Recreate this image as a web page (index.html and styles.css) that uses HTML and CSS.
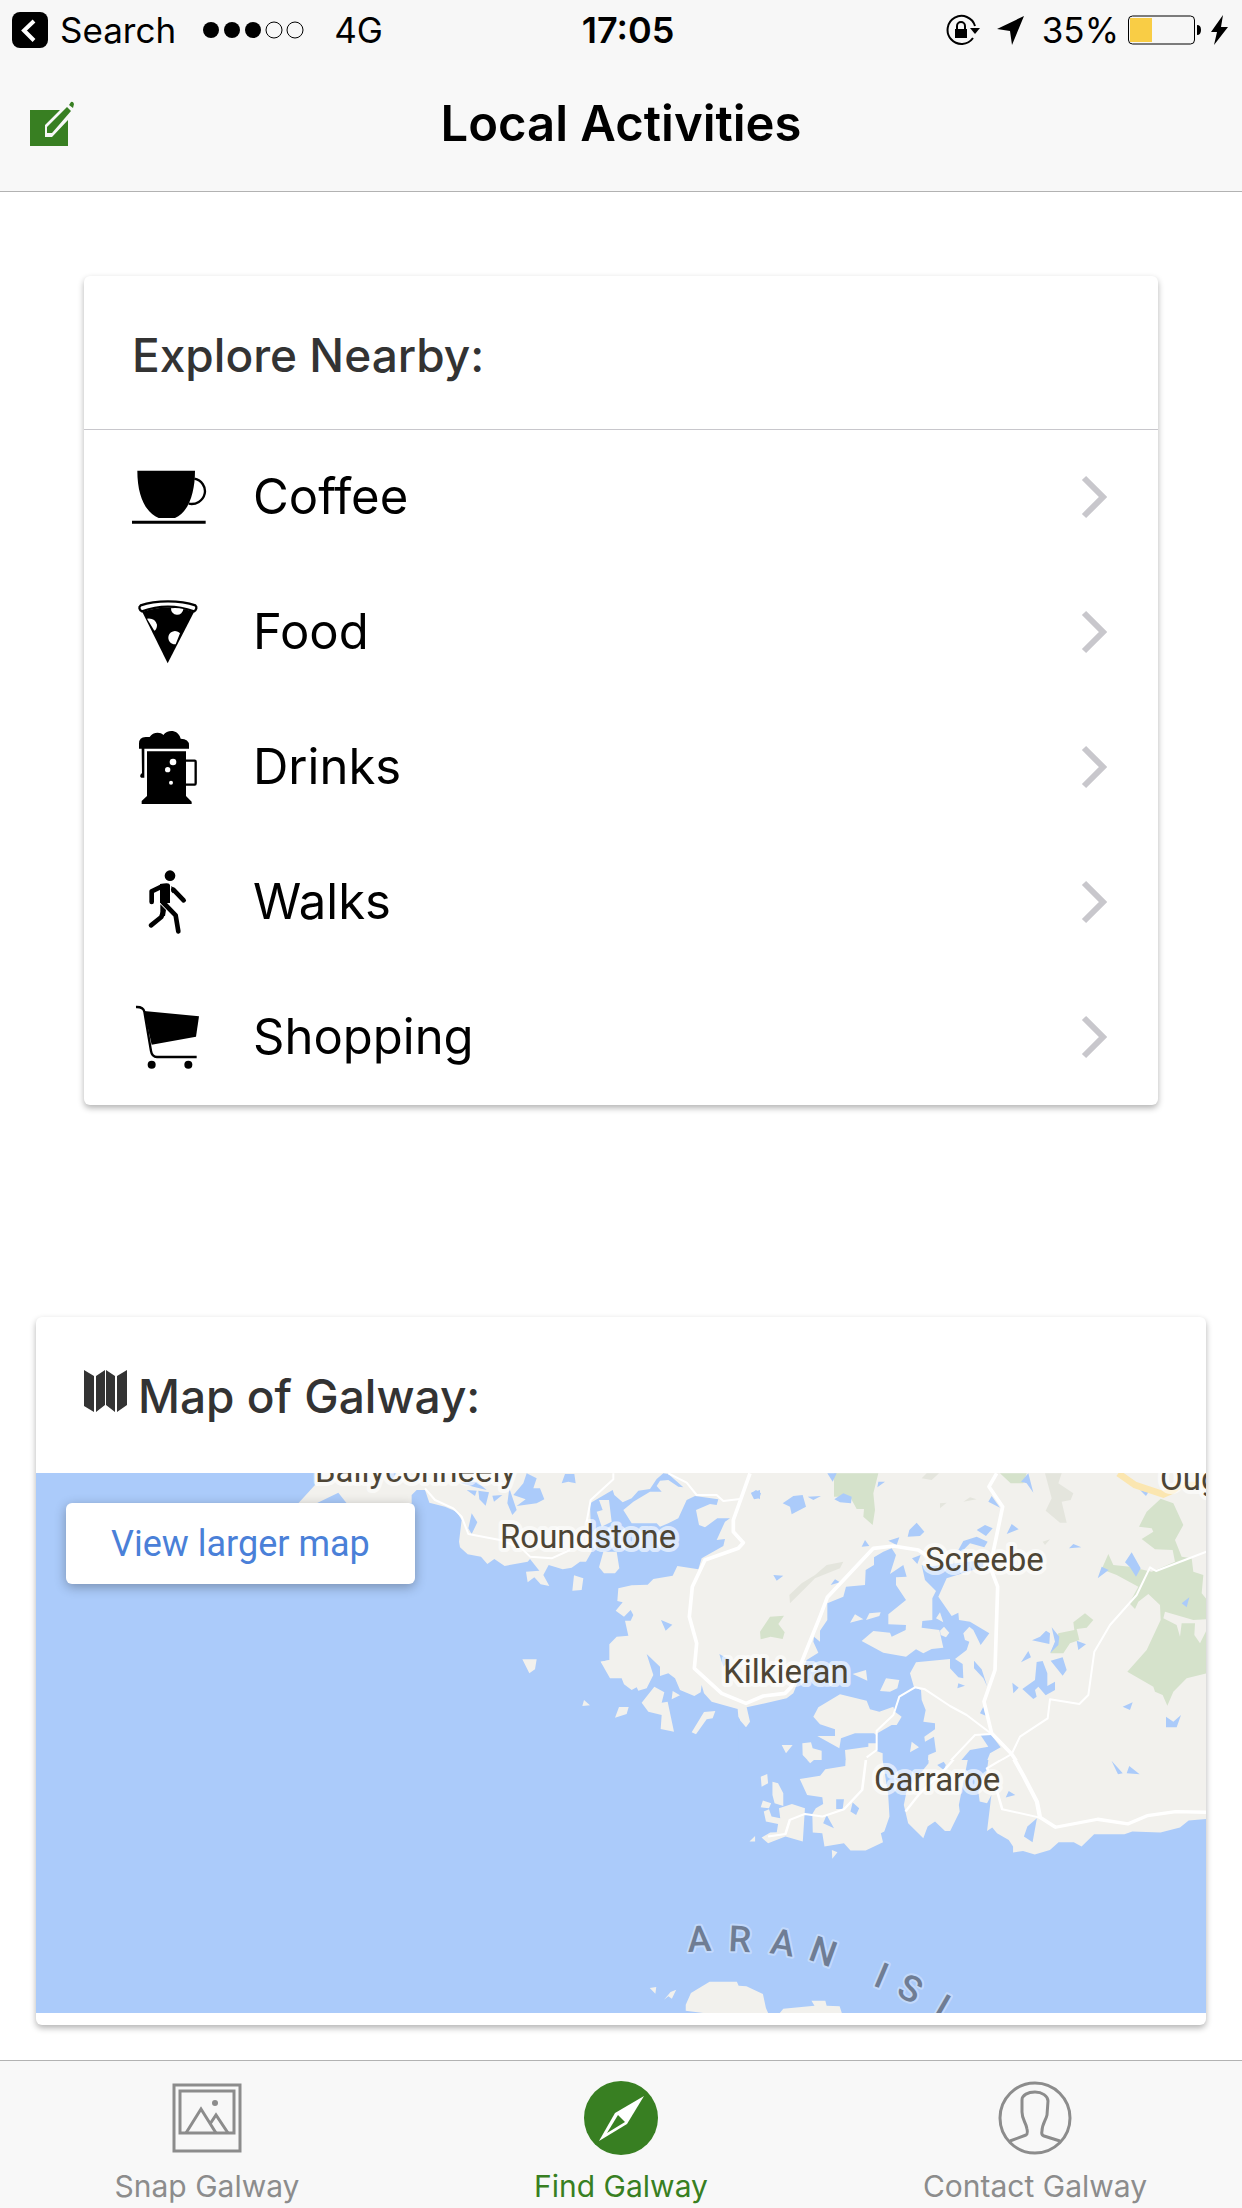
FILE: index.html
```html
<!DOCTYPE html>
<html lang="en">
<head>
<meta charset="utf-8">
<meta name="viewport" content="width=device-width, initial-scale=1">
<title>Local Activities</title>
<link rel="stylesheet" href="styles.css">
</head>
<body>
<header class="top">
  <div class="status">
    <div class="status-left">
      <a class="back" href="#search">
        <svg width="36" height="36" viewBox="0 0 36 36" aria-hidden="true"><rect width="36" height="36" rx="8"/><path d="M22 9 12 18.500l10 10" fill="none" stroke="#fff" stroke-width="4"/></svg>
        Search</a>
      <svg class="signal" width="102" height="18" viewBox="0 0 102 18" aria-hidden="true"><circle cx="9" cy="9" r="8"/><circle cx="30" cy="9" r="8"/><circle cx="51" cy="9" r="8"/><g fill="none" stroke="#000"><circle cx="72" cy="9" r="8"/><circle cx="93" cy="9" r="8"/></g></svg>
      <span>4G</span>
    </div>
    <span class="clock">17:05</span>
    <div class="status-right">
      <svg width="36" height="32" viewBox="0 0 36 32" aria-hidden="true"><path d="M30 12A14 14 0 1 0 28 24" fill="none" stroke="#000" stroke-width="2"/><path d="M25 14h10l-5 6z"/><path d="M10 15h12v9H10z"/><path d="M12 15v-3a4 4 0 0 1 8 0v3" fill="none" stroke="#000" stroke-width="2"/></svg>
      <svg class="arrow" width="27" height="32" viewBox="0 0 27 32" aria-hidden="true"><path d="M27 2 15 31l-2-14L0 15z"/></svg>
      <span>35%</span>
      <svg class="battery" width="74" height="30" viewBox="0 0 74 30" aria-hidden="true"><rect x=".5" y="1" width="66" height="28" rx="4" fill="none" stroke="#000"/><path d="M2 3h22v24H2z" fill="#f9cd45"/><path d="M69 10q4 0 4 5t-4 5z"/></svg>
      <svg width="17" height="30" viewBox="0 0 17 30" aria-hidden="true"><path d="M12 0 0 17h6L3 30 17 12h-7z"/></svg>
    </div>
  </div>
  <div class="nav">
    <button class="compose" type="button" aria-label="Compose"><svg width="45" height="45" viewBox="0 0 45 45" fill="#387f22" aria-hidden="true"><path d="M0 9h30L15 24v12h7l16-17v26H0z"/><path d="m17 26 20-20 4 4-19 22h-5zM39 4l2-3q2-1 3 2l-1 4z"/></svg></button>
    <h1>Local Activities</h1>
  </div>
</header>

<main>
  <section class="card explore">
    <h2>Explore Nearby:</h2>
    <ul>
      <li><a href="#coffee">
        <svg class="icon" viewBox="0 0 225 225" aria-hidden="true"><path d="M16 35h173c0 65-19 125-60 142H80C40 160 16 110 16 35zM0 185h221v9H0z"/><path d="M187 59a40 38 0 0 1-17 75" fill="none" stroke="#000" stroke-width="7"/></svg>
        <span>Coffee</span>
        <svg class="chevron" viewBox="0 0 26 44" aria-hidden="true"><path d="m3 3 19 19L3 41"/></svg></a></li>
      <li><a href="#food">
        <svg class="icon" viewBox="0 0 225 225" aria-hidden="true"><path d="M31 54c49-18 104-18 155 0l-79 154z"/><path d="M30 52c-8-3-11-13-4-18 45-16 119-16 164 0 6 5 3 15-4 18-51-18-106-18-156 0z" fill="#fff" stroke="#000" stroke-width="7"/><path d="M117 43q18-2 37 2a18 18 0 0 1-37-2zM45 74q24-3 30 18 0 14-8 18zM144 118a20 20 0 1 0-13 33z" fill="#fff"/></svg>
        <span>Food</span>
        <svg class="chevron" viewBox="0 0 26 44" aria-hidden="true"><path d="m3 3 19 19L3 41"/></svg></a></li>
      <li><a href="#drinks">
        <svg class="icon" viewBox="0 0 225 225" aria-hidden="true"><path d="M45 67h117v134l17 17v7H29v-9l16-15zM21 59V44q0-20 20-20h12c8-15 32-17 41-6 13-18 45-17 52 11q25 0 25 20v10zM29 59h8v87h-9q-8-5 2-14z"/><path d="M162 95h26q3 0 3 3v65q0 4-3 4h-26" fill="none" stroke="#000" stroke-width="7"/><g fill="#fff"><circle cx="123" cy="99" r="10"/><circle cx="107" cy="122" r="8"/><circle cx="117" cy="161" r="6"/></g></svg>
        <span>Drinks</span>
        <svg class="chevron" viewBox="0 0 26 44" aria-hidden="true"><path d="m3 3 19 19L3 41"/></svg></a></li>
      <li><a href="#walks">
        <svg class="icon" viewBox="0 0 225 225" aria-hidden="true"><circle cx="114" cy="35" r="16"/><path d="M84 60q25-4 28 0l2 4v53H84zM118 66l15 12-10 10-5-5zM85 121l17 17-3 18-14 2z"/><g fill="none" stroke="#000" stroke-width="14" stroke-linecap="round" stroke-linejoin="round"><path d="M90 67 59 82v32M124 77l31 32M92 114l39 40 8 48M91 150l-3 9-31 25"/></g></svg>
        <span>Walks</span>
        <svg class="chevron" viewBox="0 0 26 44" aria-hidden="true"><path d="m3 3 19 19L3 41"/></svg></a></li>
      <li><a href="#shopping">
        <svg class="icon" viewBox="0 0 225 225" aria-hidden="true"><path d="m36 36 165 16-9 61-133 24z"/><path d="M12 24q22-1 25 14l20 118q3 18 18 18h119" fill="none" stroke="#000" stroke-width="7"/><circle cx="59" cy="197" r="12"/><circle cx="169" cy="197" r="12"/></svg>
        <span>Shopping</span>
        <svg class="chevron" viewBox="0 0 26 44" aria-hidden="true"><path d="m3 3 19 19L3 41"/></svg></a></li>
    </ul>
  </section>

  <section class="card map-card">
    <h2><svg width="43" height="42" viewBox="0 0 43 42" fill="#333" aria-hidden="true"><path d="m0 0 10 6v36L0 36zM12 6l9-6v35l-9 7zM22 0l9 6v36l-9-7zM33 6l10-6v35l-10 7z"/></svg>Map of Galway:</h2>
    <div class="map">
      <svg class="map-art" viewBox="0 0 1170 540" preserveAspectRatio="xMidYMid slice" role="img" aria-label="Map of the Galway coast">
        <!-- northern coast -->
        <svg x="244" y="-13" width="926" height="300" viewBox="0 0 2778 900">
          <g class="land">
            <path d="M105 0V75L55 130H110L175 98 200 130H395V105L410 90H435L448 128 495 140 530 155 545 180 537 245 540 262 563 283 603 290 622 312 643 297 674 318 743 305 750 297 778 332 738 335 743 367 763 352 782 373 808 378 790 345 806 315 848 328 875 323 900 305 918 305 935 275 930 130 998 90 1003 105 1028 127 1055 115 1075 92 1110 87 1130 57 1150 40 1165 42 1210 82 1195 80 1165 60 1140 62 1130 78 1145 95 1110 95 1060 125 1030 150 1055 190 1130 190 1140 200 1165 190 1195 175 1220 120 1245 108 1315 118 1310 135 1290 132 1248 150 1257 195 1275 202 1312 175 1350 175 1335 185 1310 240 1335 237 1330 258 1265 295 1255 328 1192 318 1178 347 1120 357 1103 374 1055 376 1015 385 1012 423 1028 427 1007 452 1032 470 1052 450 1060 465 1052 482 1035 482 1045 527 1010 530 988 553V600L962 605 990 655H1025L1032 673 1055 690 1070 682 1075 692 1100 685 1120 645 1100 582 1140 620V648L1165 640 1185 655 1200 690 1243 708 1262 697 1265 675 1272 700 1295 725 1373 747 1375 770 1382 782V0z"/>
            <path d="M957 120H987L995 185 965 200 950 155 968 150zM970 275H1010L1018 325 1005 340H972L957 322zM882 346 910 355 905 390 877 392zM727 598H770L765 628 748 640zM962 605 990 600 1000 650zM1123 680 1153 697 1145 728 1163 725 1182 815 1142 807 1145 765 1105 755 1085 728zM1178 693 1200 706 1175 718zM912 720 930 736 907 738zM1017 741H1046L1040 762 1005 773zM1272 756 1306 753 1298 775 1280 778 1248 823 1235 817zM1380 740 1412 780 1400 802 1380 780zM1380 0H2778V900H1380z"/>
          </g>
          <g class="water">
            <path d="M575 160 592 187 575 222 565 205zM560 90 590 92 585 108zM595 92 627 97 617 137 598 118zM637 107 667 105 642 125zM688 85 710 150 697 165 682 130zM700 105 730 70 740 40 770 55 760 85 780 85 793 118 770 130 710 138 737 118zM845 70 855 42H883L887 70 865 65zM320 40H350L330 68zM540 68 590 65 620 90 580 80zM1143 480 1177 494 1157 512zM1413 98 1440 90V118zM1318 582 1350 600 1330 620z"/>
          </g>
          <g transform="translate(1380)">
            <g class="wood">
              <path d="M282 40H415L400 100 405 150 398 195 370 170 372 147H350L330 110H282zM780 40H860L850 70H812zM60 515 90 470 132 467 115 492 134 517 128 537 92 530 62 538zM1000 487 1035 460 1060 480 1040 503 1010 507 1018 540 990 550 970 580H932L955 520 1003 510zM1262 116 1300 130 1330 195 1305 240 1325 290 1355 295 1360 335 1390 345 1385 400 1400 418V478L1360 480 1275 455 1270 475 1310 495 1320 530 1325 490 1365 490 1363 525 1380 550 1400 510V640L1340 655 1300 695 1282 737 1268 705 1245 695 1240 680 1162 635 1220 570 1262 480 1260 435 1225 402 1195 425 1185 447 1168 430 1195 380 1130 345 1085 328 1105 282 1120 315 1170 320 1235 335 1305 305 1298 270 1245 268 1205 237 1240 215 1235 205 1197 200 1220 155z"/>
            </g>
            <path class="hill" d="M915 40H965L955 70 1000 100 992 120 965 125 980 188H960L917 152 935 115zM545 55 560 40H597L575 60zM148 405 185 370 225 345 260 315 310 305 300 325 225 355 200 380 150 430zM600 130 620 128 600 145zM670 125 690 112 710 118zM908 245 930 238 915 255z"/>
            <g class="water">
              <path d="M20 742 140 715 160 700 200 600 235 578 220 545 222 530 240 545V512L262 480V430L310 410 318 380 375 375 377 330 402 315V292L430 275 455 265 468 285 450 342 490 315 500 350 468 352V375L498 420 445 463V493L498 495 497 510 455 530 450 518 400 513 365 543 430 578 498 590 528 568 550 580 575 567 610 563 598 510 545 503 547 483 577 480V415L588 393 555 360 545 315 560 320 730 300V320L620 355 595 410 635 468 655 458 657 480 690 485 748 520 722 555 700 510 688 500 670 520 675 540 688 545 680 570 645 597 668 612 670 655 655 652 630 625V597L528 607 510 640 522 682 543 690 545 720 557 750 550 785 585 790V808L553 830 555 845 582 830 588 875 565 885 563 910H412L428 900V880L410 873 412 820 455 795H470L485 770 465 755 460 740 418 755 390 748 380 722 300 703 235 742 220 770 240 793 285 808V828H232L298 865 303 835 345 820 402 820 415 830 410 850H385V860L315 870 318 910H-5V775L18 802 30 785z"/>
              <path d="M33 100 48 90 63 100 58 115 42 118zM128 130 160 108 188 105 198 140 155 163 150 140zM203 110 243 108 220 120zM262 40H290L278 65zM283 118 310 100 335 110 333 130 300 127zM415 65 435 65 412 82zM843 65 865 40 880 98 860 70zM745 125 755 108 780 143zM530 188 553 215 540 228 503 230 508 210zM710 210 735 195 758 205 738 228zM800 222 815 192 836 208zM655 270 670 243 710 230 743 245 733 262 690 250 665 275zM365 260 375 240 388 258zM445 242 478 232 470 255zM516 295 542 285 532 312zM272 375 285 358 300 367zM100 345 130 347 110 362zM987 265 1000 252 1024 262zM1073 355 1085 320 1106 330zM1155 307 1175 277 1202 325 1188 350 1170 322zM1325 430 1348 412 1340 442zM876 541 900 530 918 512 930 520 928 552zM935 502 958 530 955 555 930 580 945 545zM1010 542 1038 553 1015 570zM843 607 865 573 873 592zM890 606 908 603 922 640V678L945 665V690L917 706 895 680 885 690 890 710 880 717 847 687 885 660zM932 602 968 592 980 630 968 647zM817 668 836 683 820 700zM702 602 725 628 742 680 730 655 702 625zM655 670 675 677 652 685zM720 760 730 740 737 767zM1148 740 1178 727 1170 750zM1278 770 1300 785 1323 765 1310 802H1278zM1200 90 1225 97 1218 108zM720 823H752L782 862 750 880 740 905H660L690 870 745 860zM600 905 617 900 620 910H590z"/>
            </g>
            <path class="land" d="M420 693 438 655 478 660 472 685 450 695zM330 488 345 463 370 478zM378 480 388 460 422 457 418 468zM588 475 600 457 610 487zM600 512 612 500 628 518 618 532 602 525zM338 642 378 630 382 662zM125 855H158L138 880zM187 850 213 847 218 865 245 872V900L210 908 188 885zM515 845 537 862 510 877z"/>
          </g>
          <g class="road">
            <path d="M1410 40 1360 180V215L1390 248 1375 265 1275 300 1237 380 1228 470 1250 550 1243 625 1325 700 1398 730 1450 708 1515 700 1535 680 1620 470 1642 412 1780 265 1840 258 1915 270 1945 290M2150 40 2127 80 2168 140 2145 250 2130 320 2153 380 2145 630 2112 725 2135 820 2195 882 2210 905"/>
            <path class="thin" d="M435 85 465 120 520 145 545 170 565 222 660 240 725 265 750 290 815 295 870 270M1000 40V58L932 120 920 185M1165 40 1220 68 1250 105 1310 105 1330 123 1380 117M2135 822 2060 765 2010 738 1935 688 1905 682 1858 710 1840 765 1790 812V870L1760 892M2780 275 2628 333 2610 322 2570 405 2490 495 2443 575 2425 705 2398 732 2310 718 2303 775 2220 830 2195 882 2130 920M2135 822 2085 825 1995 920"/>
          </g>
          <path class="main-road" d="M2515 40 2565 75 2650 103 2680 90 2700 75H2778"/>
        </svg>
        <!-- southern coast and islands -->
        <svg x="524" y="287" width="646" height="253" viewBox="0 240 1490 760" preserveAspectRatio="none">
          <path class="land" d="M560 225 577 250 590 235zM660 205 658 258 612 268 600 287 553 297 570 345 605 352 607 372 590 385 582 402 583 458 605 460 610 500 655 490 670 512H705L745 487 740 460 748 455 760 410 757 345 740 205zM535 372 565 385 560 485 520 470 480 490 465 473 485 458 500 457 503 432 475 425 470 395 482 388 488 410 508 415 505 385zM463 290 478 282 480 310 465 320zM490 305 503 310 515 340V378L495 370 490 345zM468 362 487 370 482 385 463 382zM437 485 450 468V485zM627 510 640 517 628 537zM850 220V250L800 330 793 375 803 430 838 475 848 440 865 425 888 453H900L922 395 920 375 945 210zM990 220 985 270 965 335 968 365 985 370 995 345 985 453 997 443 1008 460 1035 480 1045 500V518L1068 513 1095 524 1130 510 1150 487H1185L1203 500 1232 463H1302L1320 455 1385 458 1430 443 1450 422 1490 417V200zM290 975 302 940 345 906H408L412 918 430 920 468 943 475 985 480 1000H330L290 993zM507 1000 515 987 587 978 580 963H612L615 978 645 980 650 1000zM207 925 222 922 220 942zM240 960 255 937 268 930 258 957 250 950z"/>
          <path class="water" d="M1100 415 1090 487 1070 470 1078 440zM615 405 632 445 607 430zM637 358H655L652 387H637zM675 368 690 385 683 405 670 395zM1035 333 1050 345 1028 353zM1272 242 1298 280 1287 283zM1313 258 1337 283 1307 280zM870 255 885 245 890 255 885 270z"/>
          <g class="road far">
            <path d="M1040 220 1070 290 1100 365 1107 412 1143 442 1240 418 1310 432 1355 407 1420 395 1490 397"/>
            <path class="thin" d="M1040 222 985 265 1005 320 1020 388 1107 413M728 210 706 235 697 330 655 388 605 410 565 402 530 420 520 462 480 470M940 190 890 265 830 340 797 395"/>
          </g>
        </svg>
        <g class="places">
          <text x="279" y="9">Ballyconneely</text>
          <text x="464" y="75">Roundstone</text>
          <text x="889" y="98">Screebe</text>
          <text x="687" y="210">Kilkieran</text>
          <text x="838" y="318">Carraroe</text>
          <text x="1124" y="17">Oughterard</text>
        </g>
        <text class="islands" x="652 692 733 771 836 859 896" y="479 478 480 486 512 522 542" rotate="-3 3 9 20 23 26 30">ARANISL</text>
      </svg>
      <a class="larger" href="#map">View larger map</a>
    </div>
  </section>
</main>

<nav class="tabs">
  <a href="#snap"><svg width="74" height="74" viewBox="0 0 74 74" fill="none" stroke="#8c8c8c" stroke-width="3" aria-hidden="true"><path d="M4 4h66v66H4zM10 10h54v42H10z"/><path d="m16 52 15-24 15 24M40 43l6-9 12 18"/><circle cx="45" cy="22" r="3" fill="#8c8c8c" stroke="none"/></svg>Snap Galway</a>
  <a class="active" href="#find" aria-current="page"><svg width="74" height="74" viewBox="0 0 74 74" aria-hidden="true"><circle cx="37" cy="37" r="37" fill="#387f22"/><path d="M60 15 43 43 15 60 31 32z" fill="#fff"/><path d="m34 34 7 7-18 11z" fill="#387f22"/></svg>Find Galway</a>
  <a href="#contact"><svg width="74" height="74" viewBox="0 0 74 74" fill="none" stroke="#8c8c8c" stroke-width="3" aria-hidden="true"><circle cx="37" cy="37" r="35"/><path d="m12 60 16-6q2-1 1-6c-1-7-5-9-5-17V19C24 14 30 11 37 11s13 4 13 9l-1 14c-1 5-5 9-5 16q-1 4 2 5l16 5"/></svg>Contact Galway</a>
</nav>
</body>
</html>
```
FILE: styles.css
```css
* { box-sizing: border-box; }

body {
  margin: 0;
  min-height: 100vh;
  display: flex;
  flex-direction: column;
  background: #fff;
  color: #000;
  font-family: Inter, "Liberation Sans", sans-serif;
}

a { color: inherit; text-decoration: none; }
svg { display: block; flex: none; }
h1, h2 { margin: 0; }

.top {
  background: #f8f8f8;
  border-bottom: 1px solid #b2b2b2;
}

.status {
  height: 60px;
  padding: 0 14px 0 12px;
  display: grid;
  grid-template-columns: 1fr auto 1fr;
  align-items: center;
  background: #f7f7f7;
  font-size: 35px;
  line-height: 60px;
}
.status-left, .status-right, .back { display: flex; align-items: center; }
.status-right { justify-content: flex-end; }
.back { gap: 12px; }
.signal { margin: 0 30px 0 26px; }
.clock { padding-left: 16px; font-size: 36px; font-weight: 600; }
.arrow { margin: 0 18px 0 16px; }
.battery { margin: 0 9px; }

.nav {
  height: 131px;
  padding: 0 30px 4px;
  display: grid;
  grid-template-columns: 1fr auto 1fr;
  align-items: center;
}
.nav h1 { font-size: 49px; font-weight: 600; line-height: 60px; }
.compose { justify-self: start; padding: 0; border: 0; background: none; }

main { flex: 1; padding: 84px 36px 35px; }

.card {
  background: #fff;
  border-radius: 6px;
  box-shadow: 0 3px 6px rgba(0, 0, 0, .3);
}
.card h2 {
  display: flex;
  align-items: center;
  color: #333;
  font-size: 46px;
  font-weight: 500;
  line-height: 60px;
}

.explore { margin: 0 48px; }
.explore h2 { padding: 49px 48px 44px; border-bottom: 1px solid #c8c7cc; }
.explore ul { margin: 0; padding: 0; list-style: none; }
.explore a {
  height: 135px;
  padding: 0 51px 2px 48px;
  display: flex;
  align-items: center;
  font-size: 49px;
}
.explore span { flex: 1; margin-left: 46px; }
.icon { width: 75px; height: 75px; }
.chevron { width: 26px; height: 44px; fill: none; stroke: #c8c7cc; stroke-width: 6; }

.map-card { margin-top: 212px; padding-bottom: 12px; }
.map-card h2 { padding: 49px 48px 47px; gap: 11px; }
.map-card h2 svg { margin-bottom: 10px; }
.map { position: relative; height: 540px; background: #abcbfa; }
.map-art { width: 100%; height: 100%; }
.larger {
  position: absolute;
  top: 30px;
  left: 30px;
  padding: 2px 45px 0;
  background: #fff;
  border-radius: 6px;
  box-shadow: 0 3px 12px rgba(0, 0, 0, .3);
  color: #4a80d8;
  font-family: Roboto, sans-serif;
  font-size: 36px;
  line-height: 79px;
}

.land { fill: #f2f1ed; }
.water { fill: #abcbfa; }
.wood { fill: #d5e2cb; }
.hill { fill: #e4e5dd; }
.road { fill: none; stroke: #fff; stroke-width: 11; stroke-linejoin: round; }
.road .thin { stroke-width: 6; }
.far path { stroke-width: 10; }
.main-road { fill: none; stroke: #fbe6b0; stroke-width: 20; }
.places, .islands {
  font-family: Roboto, sans-serif;
  paint-order: stroke;
  stroke-linejoin: round;
}
.places { fill: #4d4535; stroke: rgba(255, 255, 255, .6); stroke-width: 8; font-size: 33px; }
.islands { fill: #6f7d94; stroke: rgba(255, 255, 255, .3); stroke-width: 4; font-size: 36px; font-weight: 500; }

.tabs {
  height: 148px;
  display: grid;
  grid-template-columns: repeat(3, 1fr);
  background: #f8f8f8;
  border-top: 1px solid #b2b2b2;
  color: #8c8c8c;
  font-size: 30px;
  line-height: 36px;
}
.tabs a {
  padding-top: 20px;
  display: flex;
  flex-direction: column;
  align-items: center;
  gap: 13px;
}
.tabs .active { color: #387f22; }
```
